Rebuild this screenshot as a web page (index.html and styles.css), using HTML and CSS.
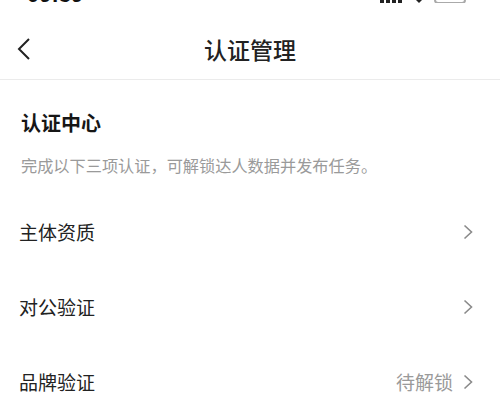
FILE: index.html
```html
<!DOCTYPE html>
<html lang="zh-CN">
<head>
  <meta charset="UTF-8">
  <meta name="viewport" content="width=device-width, initial-scale=1.0">
  <title>认证管理</title>
  <link rel="stylesheet" href="styles.css">
</head>
<body>
  <div class="status-bar">
    <span class="time">09:39</span>
    <svg class="status-icons" width="90" height="20" viewBox="0 0 90 20">
      <rect x="0" y="10" width="4" height="10" fill="#222"/>
      <rect x="6" y="7" width="4" height="13" fill="#222"/>
      <rect x="12" y="4" width="4" height="16" fill="#222"/>
      <rect x="18" y="1" width="4" height="19" fill="#222"/>
      <path d="M33 14 L39 20 L45 14 Z" fill="#222"/>
      <rect x="55" y="4" width="30" height="16" rx="3" fill="none" stroke="#aaa" stroke-width="2"/>
    </svg>
  </div>

  <div class="nav-bar">
    <svg class="back" width="14" height="24" viewBox="0 0 14 24">
      <polyline points="12,2 2,12 12,22" fill="none" stroke="#222" stroke-width="2"/>
    </svg>
    <div class="nav-title">认证管理</div>
  </div>

  <div class="intro">
    <div class="intro-title">认证中心</div>
    <div class="intro-desc">完成以下三项认证，可解锁达人数据并发布任务。</div>
  </div>

  <div class="list">
    <div class="row">
      <span class="row-label">主体资质</span>
      <span class="row-right">
        <svg class="arrow" width="10" height="16" viewBox="0 0 10 16"><polyline points="1.5,1.5 8.5,8 1.5,14.5" fill="none" stroke="#8a8a8a" stroke-width="1.6"/></svg>
      </span>
    </div>
    <div class="row">
      <span class="row-label">对公验证</span>
      <span class="row-right">
        <svg class="arrow" width="10" height="16" viewBox="0 0 10 16"><polyline points="1.5,1.5 8.5,8 1.5,14.5" fill="none" stroke="#8a8a8a" stroke-width="1.6"/></svg>
      </span>
    </div>
    <div class="row">
      <span class="row-label">品牌验证</span>
      <span class="row-right">
        <span class="row-status">待解锁</span>
        <svg class="arrow" width="10" height="16" viewBox="0 0 10 16"><polyline points="1.5,1.5 8.5,8 1.5,14.5" fill="none" stroke="#8a8a8a" stroke-width="1.6"/></svg>
      </span>
    </div>
  </div>
</body>
</html>
```

FILE: styles.css
```css
body{
  margin: 0;
  background-color: #fff;
  color: #222;
  font-family: "Noto Sans CJK SC", "Noto Sans", sans-serif;
}
.status-bar{
  height: 4px;
  overflow: hidden;
  display: flex;
  align-items: flex-end;
  justify-content: space-between;
  padding: 0 30px 0 27px;
}
.time{
  font-family: "Liberation Sans", sans-serif;
  font-weight: bold;
  font-size: 22px;
  line-height: 20px;
  margin-bottom: -1px;
  color: #111;
}
.status-icons{
  flex-shrink: 0;
  margin-bottom: 1px;
}
.nav-bar{
  height: 76px;
  box-sizing: border-box;
  padding: 14px 0 0 17px;
  display: flex;
  align-items: center;
  position: relative;
  border-bottom: 1px solid #ebebeb;
}
.back{
  display: block;
}
.nav-title{
  position: absolute;
  left: 0;
  right: 0;
  top: 14px;
  bottom: 0;
  display: flex;
  align-items: center;
  justify-content: center;
  font-size: 23px;
  font-weight: 500;
  pointer-events: none;
}
.intro{
  padding: 29px 20px 0 21px;
}
.intro-title{
  font-size: 20px;
  line-height: 28px;
  font-weight: bold;
  color: #161616;
}
.intro-desc{
  margin-top: 16px;
  font-size: 16.2px;
  line-height: 24px;
  color: #9a9a9a;
}
.list{
  margin-top: 17px;
}
.row{
  height: 75px;
  display: flex;
  align-items: center;
  justify-content: space-between;
  padding: 0 27px 0 19px;
}
.row-label{
  font-size: 19px;
  color: #222;
}
.row-right{
  display: flex;
  align-items: center;
}
.row-status{
  font-size: 19px;
  color: #9a9a9a;
  margin-right: 10px;
}
.arrow{
  display: block;
}
```
